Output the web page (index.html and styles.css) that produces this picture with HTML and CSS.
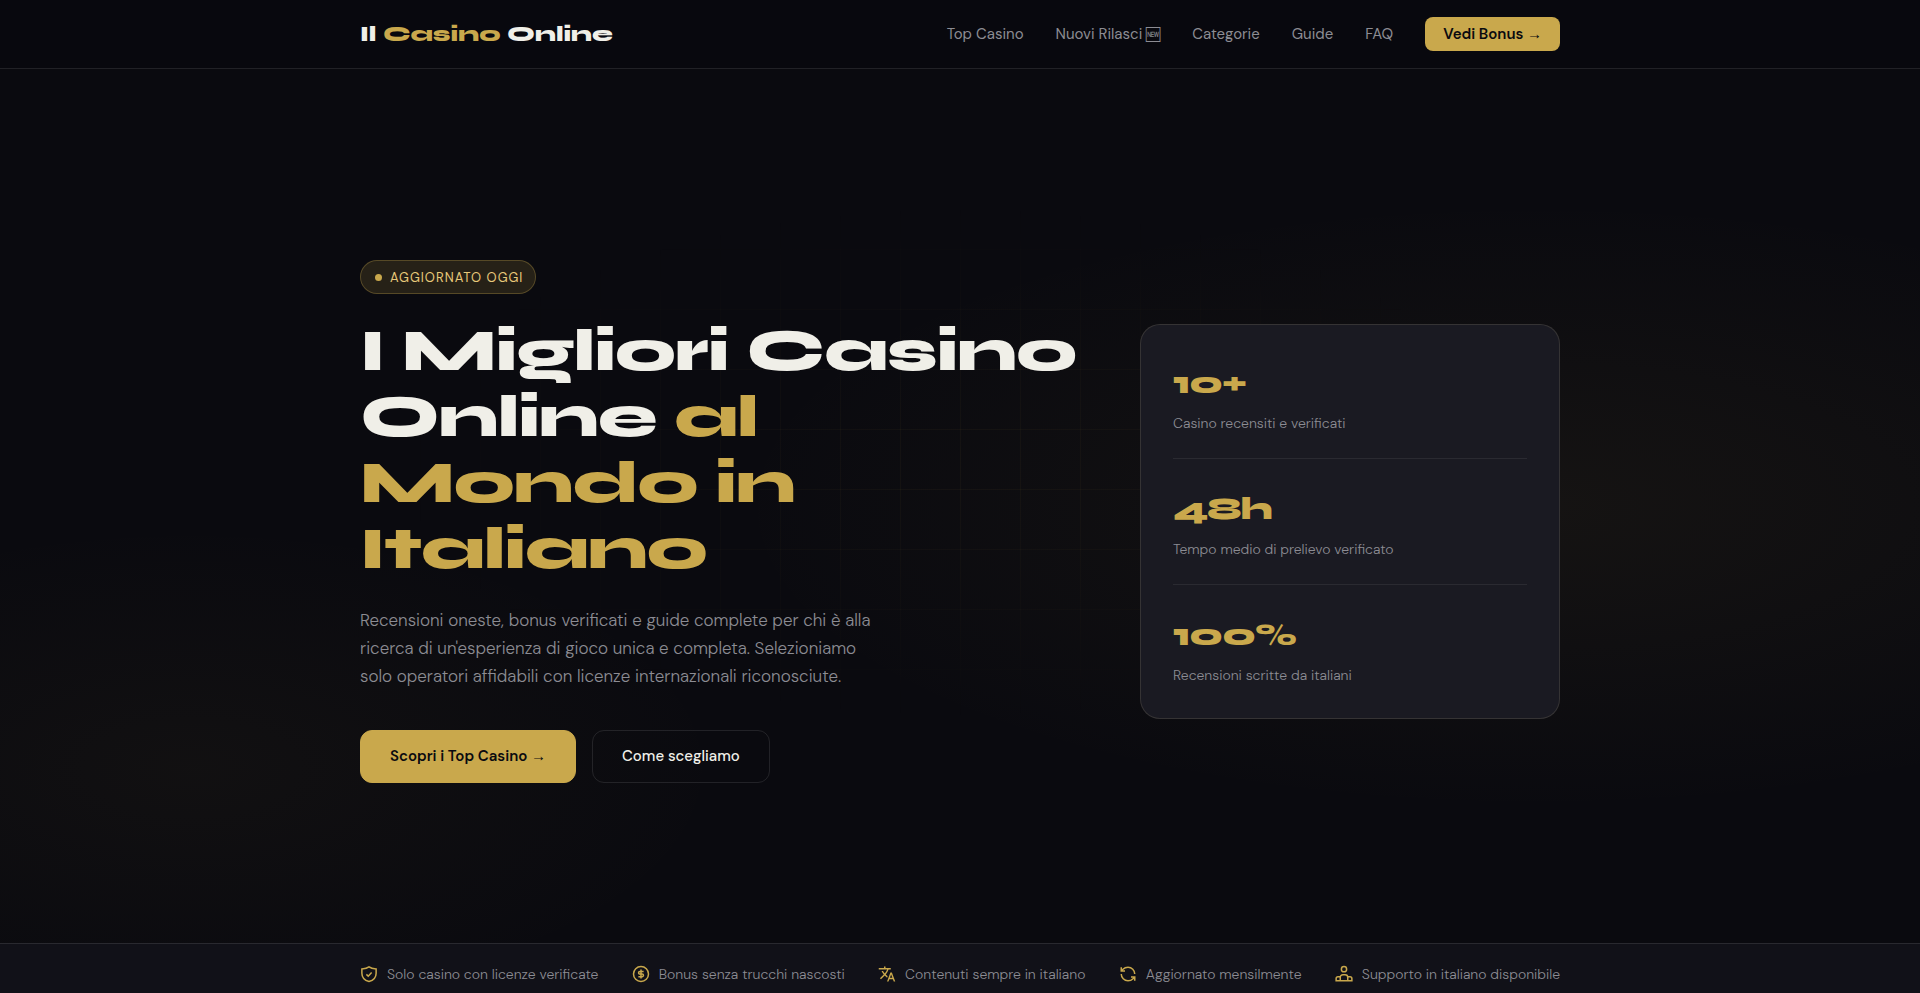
FILE: index.html
```html
<!DOCTYPE html>
<html lang="it">
<head>
    <meta charset="UTF-8">
    <meta name="viewport" content="width=device-width, initial-scale=1.0">
    <title>Il Casino Online</title>
    <link rel="stylesheet" href="styles.css">
</head>
<body>
    <header class="site-header">
        <div class="container header-inner">
            <a href="#" class="logo">Il <span>Casino</span> Online</a>
            <nav class="main-nav">
                <a href="#top">Top Casino</a>
                <a href="#nuovi">Nuovi Rilasci <span class="emoji">🆕&#xFE0E;</span></a>
                <a href="#categorie">Categorie</a>
                <a href="#guide">Guide</a>
                <a href="#faq">FAQ</a>
                <a href="#bonus" class="nav-cta">Vedi Bonus <span class="arrow">→</span></a>
            </nav>
        </div>
    </header>

    <main>
        <section class="hero">
            <div class="container hero-inner">
                <div class="hero-content">
                    <div class="badge"><span class="badge-dot"></span>Aggiornato oggi</div>
                    <h1>I Migliori Casino<br>Online <span>al<br>Mondo in<br>Italiano</span></h1>
                    <p class="hero-text">Recensioni oneste, bonus verificati e guide complete per chi è alla<br>ricerca di un'esperienza di gioco unica e completa. Selezioniamo<br>solo operatori affidabili con licenze internazionali riconosciute.</p>
                    <div class="hero-actions">
                        <a href="#top" class="btn btn-gold">Scopri i Top Casino <span class="arrow">→</span></a>
                        <a href="#guide" class="btn btn-outline">Come scegliamo</a>
                    </div>
                </div>

                <div class="stats-card">
                    <div class="stat">
                        <div class="stat-number">10+</div>
                        <div class="stat-label">Casino recensiti e verificati</div>
                    </div>
                    <div class="stat">
                        <div class="stat-number">48h</div>
                        <div class="stat-label">Tempo medio di prelievo verificato</div>
                    </div>
                    <div class="stat">
                        <div class="stat-number">100%</div>
                        <div class="stat-label">Recensioni scritte da italiani</div>
                    </div>
                </div>
            </div>
        </section>

        <section class="trust-bar">
            <ul class="container trust-list">
                <li>
                    <svg class="icon" viewBox="0 0 24 24"><path d="M12 2.500C9.500 4.500 6.500 5 2.500 5.200V11c0 5.500 3.500 9.500 9.500 11 6-1.500 9.500-5.500 9.500-11V5.200C17.500 5 14.500 4.500 12 2.500z"/><path d="M8.500 12.500l2.500 2.500 4.500-5"/></svg>
                    Solo casino con licenze verificate
                </li>
                <li>
                    <svg class="icon" viewBox="0 0 24 24"><circle cx="12" cy="12" r="10"/><path d="M15.500 8.500h-5a1.750 1.750 0 0 0 0 3.500h3a1.750 1.750 0 0 1 0 3.500h-5M12 6v12"/></svg>
                    Bonus senza trucchi nascosti
                </li>
                <li>
                    <svg class="icon icon-fill" viewBox="0 0 24 24"><path d="M12.870 15.070l-2.540-2.510.03-.03c1.740-1.940 2.980-4.170 3.710-6.530H17V4h-7V2H8v2H1v1.990h11.170C11.500 7.920 10.440 9.750 9 11.350 8.070 10.320 7.300 9.190 6.690 8h-2c.73 1.630 1.730 3.170 2.980 4.560l-5.090 5.020L4 19l5-5 3.110 3.110.76-2.040zM18.500 10h-2L12 22h2l1.120-3h4.750L21 22h2l-4.500-12zm-2.620 7l1.620-4.330L19.120 17h-3.240z"/></svg>
                    Contenuti sempre in italiano
                </li>
                <li>
                    <svg class="icon" viewBox="0 0 24 24"><path d="M21 12a9 9 0 0 0-9-9 9.750 9.750 0 0 0-6.740 2.740L3 8M3 3v5h5M3 12a9 9 0 0 0 9 9 9.750 9.750 0 0 0 6.740-2.740L21 16M16 16h5v5"/></svg>
                    Aggiornato mensilmente
                </li>
                <li>
                    <svg class="icon" viewBox="0 0 24 24"><circle cx="12" cy="5.500" r="3.500"/><path d="M7 21v-4.500a3.500 3.500 0 0 1 3.500-3.500h3a3.500 3.500 0 0 1 3.500 3.500V21M7 15.500H4A2.500 2.500 0 0 0 1.500 18v3h21v-3a2.500 2.500 0 0 0-2.500-2.500h-3"/></svg>
                    Supporto in italiano disponibile
                </li>
            </ul>
        </section>
    </main>
</body>
</html>
```
FILE: styles.css
```css
:root {
    --bg: #0a0a0f;
    --bg-strip: #111118;
    --bg-card: #1a1a22;
    --gold: #c9a84c;
    --gold-light: #e8c97a;
    --white: #f0efe8;
    --muted: #8c8c93;
    --border: rgba(255, 255, 255, 0.1);
    --font-display: "Syne", "DejaVu Sans", sans-serif;
    --font-body: "DM Sans", "Inter", sans-serif;
}

* {
    box-sizing: border-box;
    margin: 0;
    padding: 0;
}

body {
    background: var(--bg);
    color: var(--white);
    font-family: var(--font-body);
    font-size: 16px;
    overflow-x: hidden;
}

a {
    color: inherit;
    text-decoration: none;
}

.container {
    width: 100%;
    max-width: 1248px;
    margin: 0 auto;
    padding: 0 24px;
}

.arrow {
    font-family: "Liberation Sans", Arial, sans-serif;
    font-weight: 400;
    line-height: 1;
}

.emoji {
    font-family: "Noto Sans Symbols2", "Symbola", "DejaVu Sans", sans-serif;
    font-size: 13px;
    line-height: 1;
}

/* Header */
.site-header {
    background: #08080e;
    border-bottom: 1px solid var(--border);
}

.header-inner {
    display: flex;
    align-items: center;
    justify-content: space-between;
    min-height: 68px;
}

.logo {
    font-family: var(--font-display);
    font-size: 21px;
    font-weight: 800;
}

.logo span {
    color: var(--gold);
}

.main-nav {
    display: flex;
    align-items: center;
    gap: 32px;
    color: var(--muted);
    font-size: 15px;
    line-height: 34px;
}

.nav-cta {
    padding: 0 18px;
    border-radius: 8px;
    background: var(--gold);
    color: var(--bg);
    font-weight: 600;
}

/* Hero */
.hero {
    position: relative;
    display: flex;
    align-items: center;
    min-height: 88vh;
    padding: 72px 0 40px;
    background:
        radial-gradient(ellipse 60% 50% at 80% 50%, rgba(201, 168, 76, 0.06), transparent 70%),
        radial-gradient(ellipse 40% 40% at 10% 80%, rgba(201, 168, 76, 0.04), transparent 70%);
}

/* faint grid, fades out from the middle */
.hero::before {
    content: "";
    position: absolute;
    inset: 0;
    background-image:
        linear-gradient(rgba(201, 168, 76, 0.05) 1px, transparent 1px),
        linear-gradient(90deg, rgba(201, 168, 76, 0.05) 1px, transparent 1px);
    background-size: 60px 60px;
    mask-image: radial-gradient(ellipse 30% 30% at 50% 45%, black, transparent);
}

.hero-inner {
    position: relative;
    display: grid;
    grid-template-columns: 1fr 420px;
    gap: 60px;
    align-items: center;
}

.badge {
    display: flex;
    align-items: center;
    gap: 8px;
    width: fit-content;
    height: 34px;
    padding: 0 12px 0 14px;
    border: 1px solid rgba(201, 168, 76, 0.3);
    border-radius: 20px;
    background: rgba(201, 168, 76, 0.15);
    color: var(--gold-light);
    font-size: 13px;
    letter-spacing: 1px;
    text-transform: uppercase;
}

.badge-dot {
    width: 7px;
    height: 7px;
    border-radius: 50%;
    background: var(--gold);
}

h1 {
    margin: 24px 0;
    font-family: var(--font-display);
    font-size: 60px;
    font-weight: 800;
    letter-spacing: -1px;
    line-height: 66px;
}

h1 span {
    color: var(--gold);
}

.hero-text {
    margin-bottom: 40px;
    color: var(--muted);
    font-size: 17px;
    font-weight: 300;
    line-height: 28px;
}

.hero-actions {
    display: flex;
    flex-wrap: wrap;
    gap: 16px;
}

.btn {
    padding: 0 29px;
    border: 1px solid transparent;
    border-radius: 12px;
    font-size: 15px;
    line-height: 51px;
}

.btn-gold {
    background: var(--gold);
    border-color: var(--gold);
    color: var(--bg);
    font-weight: 600;
}

.btn-outline {
    border-color: var(--border);
    font-weight: 500;
}

/* Stats */
.stats-card {
    padding: 32px;
    border: 1px solid rgba(220, 205, 160, 0.14);
    border-radius: 20px;
    background: var(--bg-card);
}

.stat {
    padding: 32px 0 24px;
    border-bottom: 1px solid rgba(255, 255, 255, 0.07);
}

.stat:first-child {
    padding-top: 8px;
}

.stat:last-child {
    padding-bottom: 0;
    border-bottom: none;
}

.stat-number {
    color: var(--gold);
    font-family: var(--font-display);
    font-size: 32px;
    font-weight: 800;
    letter-spacing: -1px;
    line-height: 36px;
}

.stat-label {
    margin-top: 12px;
    color: var(--muted);
    font-size: 14px;
    font-weight: 300;
    line-height: 21px;
}

/* Trust bar */
.trust-bar {
    padding: 20px 0;
    border-top: 1px solid var(--border);
    background: var(--bg-strip);
}

.trust-list {
    display: flex;
    flex-wrap: wrap;
    justify-content: space-between;
    gap: 20px;
    list-style: none;
}

.trust-list li {
    display: flex;
    align-items: center;
    gap: 9px;
    color: var(--muted);
    font-size: 14px;
    font-weight: 300;
    line-height: 20px;
}

.icon {
    width: 18px;
    height: 18px;
    fill: none;
    stroke: var(--gold);
    stroke-width: 2;
}

.icon-fill {
    fill: var(--gold);
    stroke: none;
}
```
